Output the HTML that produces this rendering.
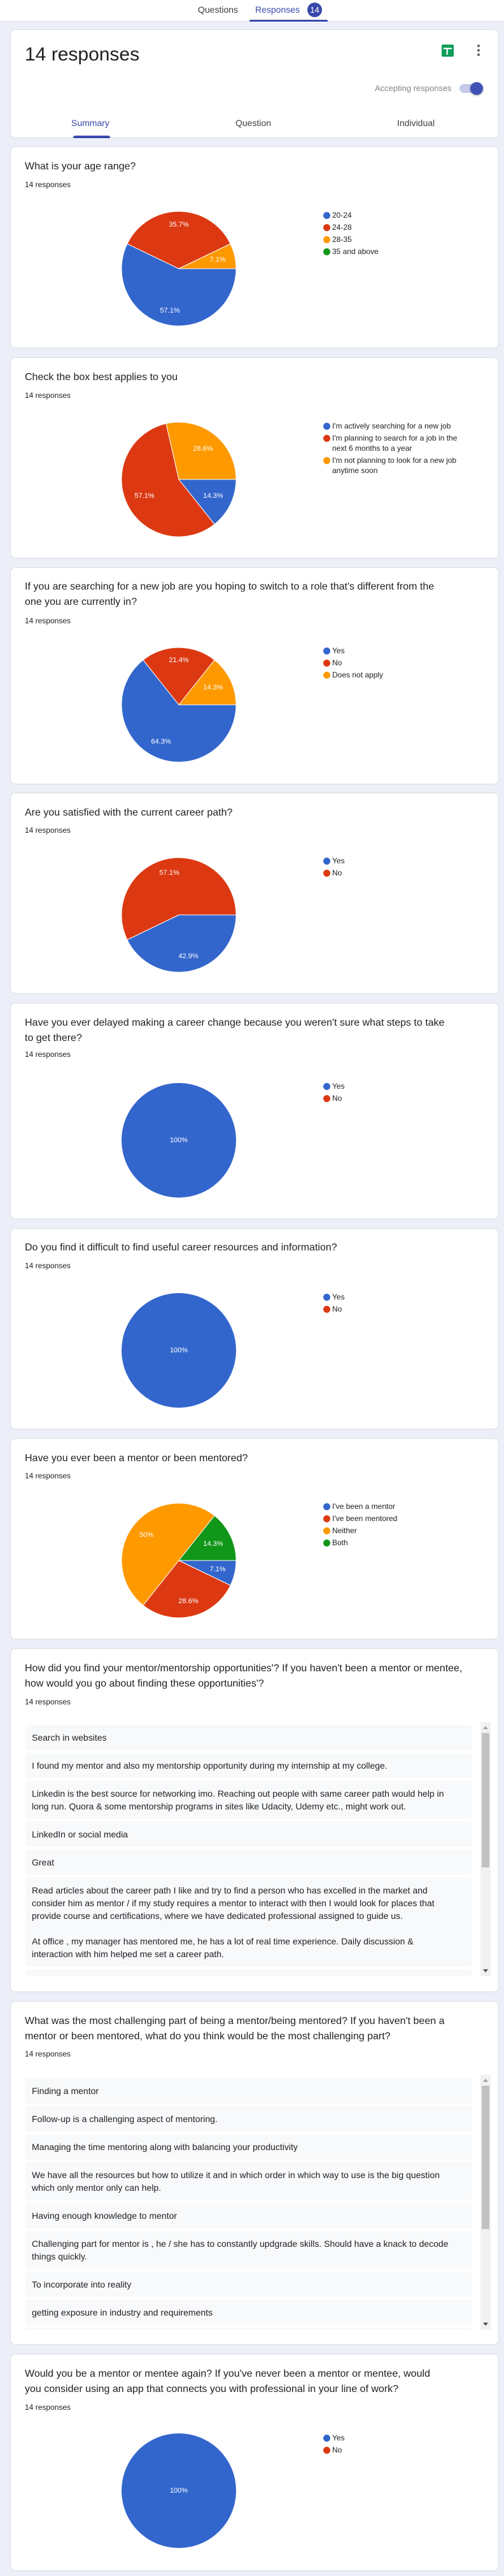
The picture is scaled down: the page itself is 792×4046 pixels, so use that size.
<!DOCTYPE html>
<html><head><meta charset="utf-8">
<style>
*{box-sizing:border-box;margin:0;padding:0}
body{width:792px;height:4046px;background:#eceff7;position:relative;font-family:"Liberation Sans",Arial,sans-serif;color:#202124;overflow:hidden}
.a{position:absolute}
.card{position:absolute;left:16px;width:768px;background:#fff;border:1px solid #dadce0;border-radius:8px}
.q{position:absolute;left:39px;font-size:16px;line-height:24px;white-space:nowrap;color:#202124}
.r{position:absolute;left:39px;font-size:12px;line-height:16px;color:#202124}
.lg{position:absolute;left:508px;font-size:12px;line-height:16px;white-space:nowrap;color:#202124}
.lg i{position:absolute;left:0;top:3px;width:11px;height:11px;border-radius:50%}
.lg span{position:absolute;left:14px;top:0}
.box{position:absolute;left:40px;width:731px;overflow:hidden}
.items{position:absolute;left:0;top:4px;width:702px}
.it{background:#f8f9fa;border-radius:4px;margin-bottom:4px;padding:10px 10px;font-size:14px;line-height:20px;color:#202124;white-space:nowrap}
.trk{position:absolute;right:0;top:0;width:16px;height:100%;background:#f1f1f1}
.thm{position:absolute;left:2px;width:12px;background:#c1c1c1}
.up,.dn{position:absolute;left:4px;width:0;height:0;border-left:4px solid transparent;border-right:4px solid transparent}
.up{top:6px;border-bottom:5px solid #a3a3a3}
.dn{bottom:6px;border-top:5px solid #505050}
svg text{font-family:"Liberation Sans",Arial,sans-serif;font-size:11px;fill:#fff;text-anchor:middle;dominant-baseline:central}
</style></head><body>

<div class="a" style="left:0;top:0;width:792px;height:34px;background:#fff;border-bottom:1px solid #dadce0"></div>
<div class="a" style="left:311px;top:7px;font-size:14px;color:#3c4043">Questions</div>
<div class="a" style="left:401px;top:7px;font-size:14px;color:#3949ab">Responses</div>
<div class="a" style="left:483px;top:4px;width:23px;height:23px;border-radius:50%;background:#3949ab;color:#fff;font-size:13px;line-height:23px;text-align:center">14</div>
<div class="a" style="left:392px;top:31px;width:123px;height:3px;background:#3949ab;border-radius:2px 2px 0 0"></div>

<div class="card" style="top:46px;height:171px"></div>
<div class="a" style="left:39px;top:66px;font-size:30px;line-height:40px;color:#202124">14 responses</div>
<svg class="a" style="left:694px;top:70px" width="19" height="19" viewBox="0 0 19 19"><rect width="19" height="19" rx="2" fill="#0f9d58"/><rect x="3" y="5" width="13" height="2.2" fill="#fff"/><rect x="7.5" y="5" width="2.2" height="11" fill="#fff"/></svg>
<svg class="a" style="left:748px;top:69px" width="8" height="22"><circle cx="4" cy="3" r="2" fill="#5f6368"/><circle cx="4" cy="10" r="2" fill="#5f6368"/><circle cx="4" cy="17" r="2" fill="#5f6368"/></svg>
<div class="a" style="left:589px;top:131px;font-size:13px;color:#80868b">Accepting responses</div>
<div class="a" style="left:722px;top:132px;width:34px;height:14px;border-radius:7px;background:#c5cae9"></div>
<div class="a" style="left:739px;top:129px;width:20px;height:20px;border-radius:50%;background:#3f51b5;box-shadow:0 1px 3px rgba(0,0,0,.35)"></div>
<div class="a" style="left:112px;top:185px;font-size:14px;color:#3949ab">Summary</div>
<div class="a" style="left:370px;top:185px;font-size:14px;color:#3c4043">Question</div>
<div class="a" style="left:624px;top:185px;font-size:14px;color:#3c4043">Individual</div>
<div class="a" style="left:115px;top:213px;width:58px;height:4px;background:#3949ab;border-radius:3px 3px 0 0"></div>

<div class="card" style="top:230px;height:317px"></div>
<div class="q" style="top:250px">What is your age range?</div>
<div class="r" style="top:282px">14 responses</div>
<svg class="a" style="left:191px;top:332px" width="180" height="180" viewBox="-90 -90 180 180">
<g stroke="#fff" stroke-width="1">
<path d="M0 0L90 0A90 90 0 1 1 -81.1 -39.05Z" fill="#3366cc"/>
<path d="M0 0L-81.1 -39.05A90 90 0 0 1 81.1 -39.05Z" fill="#dc3912"/>
<path d="M0 0L81.1 -39.05A90 90 0 0 1 90 0Z" fill="#ff9900"/></g>
<text x="-14" y="66">57.1%</text><text x="0" y="-69">35.7%</text><text x="61" y="-14">7.1%</text></svg>
<div class="lg" style="top:330px"><i style="background:#3366cc"></i><span>20-24</span></div>
<div class="lg" style="top:349px"><i style="background:#dc3912"></i><span>24-28</span></div>
<div class="lg" style="top:368px"><i style="background:#ff9900"></i><span>28-35</span></div>
<div class="lg" style="top:387px"><i style="background:#109618"></i><span>35 and above</span></div>

<div class="card" style="top:561px;height:316px"></div>
<div class="q" style="top:581px">Check the box best applies to you</div>
<div class="r" style="top:613px">14 responses</div>
<svg class="a" style="left:191px;top:663px" width="180" height="180" viewBox="-90 -90 180 180">
<g stroke="#fff" stroke-width="1">
<path d="M0 0L90 0A90 90 0 0 1 56.1 70.4Z" fill="#3366cc"/>
<path d="M0 0L56.1 70.4A90 90 0 1 1 -20 -87.7Z" fill="#dc3912"/>
<path d="M0 0L-20 -87.7A90 90 0 0 1 90 0Z" fill="#ff9900"/></g>
<text x="38" y="-48">28.6%</text><text x="-54" y="26">57.1%</text><text x="54" y="26">14.3%</text></svg>
<div class="lg" style="top:661px"><i style="background:#3366cc"></i><span>I'm actively searching for a new job</span></div>
<div class="lg" style="top:680px"><i style="background:#dc3912"></i><span>I'm planning to search for a job in the<br>next 6 months to a year</span></div>
<div class="lg" style="top:715px"><i style="background:#ff9900"></i><span>I'm not planning to look for a new job<br>anytime soon</span></div>

<div class="card" style="top:891px;height:341px"></div>
<div class="q" style="top:910px">If you are searching for a new job are you hoping to switch to a role that's different from the<br>one you are currently in?</div>
<div class="r" style="top:967px">14 responses</div>
<svg class="a" style="left:191px;top:1017px" width="180" height="180" viewBox="-90 -90 180 180">
<g stroke="#fff" stroke-width="1">
<path d="M0 0L90 0A90 90 0 1 1 -56.1 -70.4Z" fill="#3366cc"/>
<path d="M0 0L-56.1 -70.4A90 90 0 0 1 56.1 -70.4Z" fill="#dc3912"/>
<path d="M0 0L56.1 -70.4A90 90 0 0 1 90 0Z" fill="#ff9900"/></g>
<text x="-28" y="58">64.3%</text><text x="0" y="-70">21.4%</text><text x="54" y="-27">14.3%</text></svg>
<div class="lg" style="top:1014px"><i style="background:#3366cc"></i><span>Yes</span></div>
<div class="lg" style="top:1033px"><i style="background:#dc3912"></i><span>No</span></div>
<div class="lg" style="top:1052px"><i style="background:#ff9900"></i><span>Does not apply</span></div>

<div class="card" style="top:1245px;height:316px"></div>
<div class="q" style="top:1265px">Are you satisfied with the current career path?</div>
<div class="r" style="top:1296px">14 responses</div>
<svg class="a" style="left:191px;top:1347px" width="180" height="180" viewBox="-90 -90 180 180">
<g stroke="#fff" stroke-width="1">
<path d="M0 0L90 0A90 90 0 0 1 -81.1 39.05Z" fill="#3366cc"/>
<path d="M0 0L-81.1 39.05A90 90 0 1 1 90 0Z" fill="#dc3912"/></g>
<text x="15" y="65">42.9%</text><text x="-15" y="-66">57.1%</text></svg>
<div class="lg" style="top:1344px"><i style="background:#3366cc"></i><span>Yes</span></div>
<div class="lg" style="top:1363px"><i style="background:#dc3912"></i><span>No</span></div>

<div class="card" style="top:1575px;height:340px"></div>
<div class="q" style="top:1595px">Have you ever delayed making a career change because you weren't sure what steps to take<br>to get there?</div>
<div class="r" style="top:1648px">14 responses</div>
<svg class="a" style="left:191px;top:1701px" width="180" height="180" viewBox="-90 -90 180 180">
<circle r="90" fill="#3366cc"/><text x="0" y="0">100%</text></svg>
<div class="lg" style="top:1698px"><i style="background:#3366cc"></i><span>Yes</span></div>
<div class="lg" style="top:1717px"><i style="background:#dc3912"></i><span>No</span></div>

<div class="card" style="top:1929px;height:316px"></div>
<div class="q" style="top:1948px">Do you find it difficult to find useful career resources and information?</div>
<div class="r" style="top:1980px">14 responses</div>
<svg class="a" style="left:191px;top:2031px" width="180" height="180" viewBox="-90 -90 180 180">
<circle r="90" fill="#3366cc"/><text x="0" y="0">100%</text></svg>
<div class="lg" style="top:2029px"><i style="background:#3366cc"></i><span>Yes</span></div>
<div class="lg" style="top:2048px"><i style="background:#dc3912"></i><span>No</span></div>

<div class="card" style="top:2259px;height:316px"></div>
<div class="q" style="top:2279px">Have you ever been a mentor or been mentored?</div>
<div class="r" style="top:2310px">14 responses</div>
<svg class="a" style="left:191px;top:2361px" width="180" height="180" viewBox="-90 -90 180 180">
<g stroke="#fff" stroke-width="1">
<path d="M0 0L90 0A90 90 0 0 1 81.1 39.05Z" fill="#3366cc"/>
<path d="M0 0L81.1 39.05A90 90 0 0 1 -56.1 70.4Z" fill="#dc3912"/>
<path d="M0 0L-56.1 70.4A90 90 0 0 1 56.1 -70.4Z" fill="#ff9900"/>
<path d="M0 0L56.1 -70.4A90 90 0 0 1 90 0Z" fill="#109618"/></g>
<text x="61" y="14">7.1%</text><text x="15" y="64">28.6%</text><text x="-51" y="-40">50%</text><text x="54" y="-26">14.3%</text></svg>
<div class="lg" style="top:2358px"><i style="background:#3366cc"></i><span>I've been a mentor</span></div>
<div class="lg" style="top:2377px"><i style="background:#dc3912"></i><span>I've been mentored</span></div>
<div class="lg" style="top:2396px"><i style="background:#ff9900"></i><span>Neither</span></div>
<div class="lg" style="top:2415px"><i style="background:#109618"></i><span>Both</span></div>

<div class="card" style="top:2589px;height:540px"></div>
<div class="q" style="top:2609px">How did you find your mentor/mentorship opportunities'? If you haven't been a mentor or mentee,<br>how would you go about finding these opportunities'?</div>
<div class="r" style="top:2665px">14 responses</div>
<div class="box" style="top:2705px;height:399px">
<div class="items">
<div class="it">Search in websites</div>
<div class="it">I found my mentor and also my mentorship opportunity during my internship at my college.</div>
<div class="it">Linkedin is the best source for networking imo. Reaching out people with same career path would help in<br>long run. Quora &amp; some mentorship programs in sites like Udacity, Udemy etc., might work out.</div>
<div class="it">LinkedIn or social media</div>
<div class="it">Great</div>
<div class="it">Read articles about the career path I like and try to find a person who has excelled in the market and<br>consider him as mentor / if my study requires a mentor to interact with then I would look for places that<br>provide course and certifications, where we have dedicated professional assigned to guide us.<br><br>At office , my manager has mentored me, he has a lot of real time experience. Daily discussion &amp;<br>interaction with him helped me set a career path.</div>
<div class="it">&nbsp;</div>
</div>
<div class="trk"><div class="up"></div><div class="thm" style="top:17px;height:211px"></div><div class="dn"></div></div>
</div>

<div class="card" style="top:3143px;height:540px"></div>
<div class="q" style="top:3163px">What was the most challenging part of being a mentor/being mentored? If you haven't been a<br>mentor or been mentored, what do you think would be the most challenging part?</div>
<div class="r" style="top:3218px">14 responses</div>
<div class="box" style="top:3259px;height:400px">
<div class="items" style="top:5px">
<div class="it">Finding a mentor</div>
<div class="it">Follow-up is a challenging aspect of mentoring.</div>
<div class="it">Managing the time mentoring along with balancing your productivity</div>
<div class="it">We have all the resources but how to utilize it and in which order in which way to use is the big question<br>which only mentor only can help.</div>
<div class="it">Having enough knowledge to mentor</div>
<div class="it">Challenging part for mentor is , he / she has to constantly updgrade skills. Should have a knack to decode<br>things quickly.</div>
<div class="it">To incorporate into reality</div>
<div class="it">getting exposure in industry and requirements</div>
<div class="it">&nbsp;</div>
</div>
<div class="trk"><div class="up"></div><div class="thm" style="top:17px;height:225px"></div><div class="dn"></div></div>
</div>

<div class="card" style="top:3697px;height:341px"></div>
<div class="q" style="top:3717px">Would you be a mentor or mentee again? If you've never been a mentor or mentee, would<br>you consider using an app that connects you with professional in your line of work?</div>
<div class="r" style="top:3773px">14 responses</div>
<svg class="a" style="left:191px;top:3822px" width="180" height="180" viewBox="-90 -90 180 180">
<circle r="90" fill="#3366cc"/><text x="0" y="0">100%</text></svg>
<div class="lg" style="top:3821px"><i style="background:#3366cc"></i><span>Yes</span></div>
<div class="lg" style="top:3840px"><i style="background:#dc3912"></i><span>No</span></div>

</body></html>
